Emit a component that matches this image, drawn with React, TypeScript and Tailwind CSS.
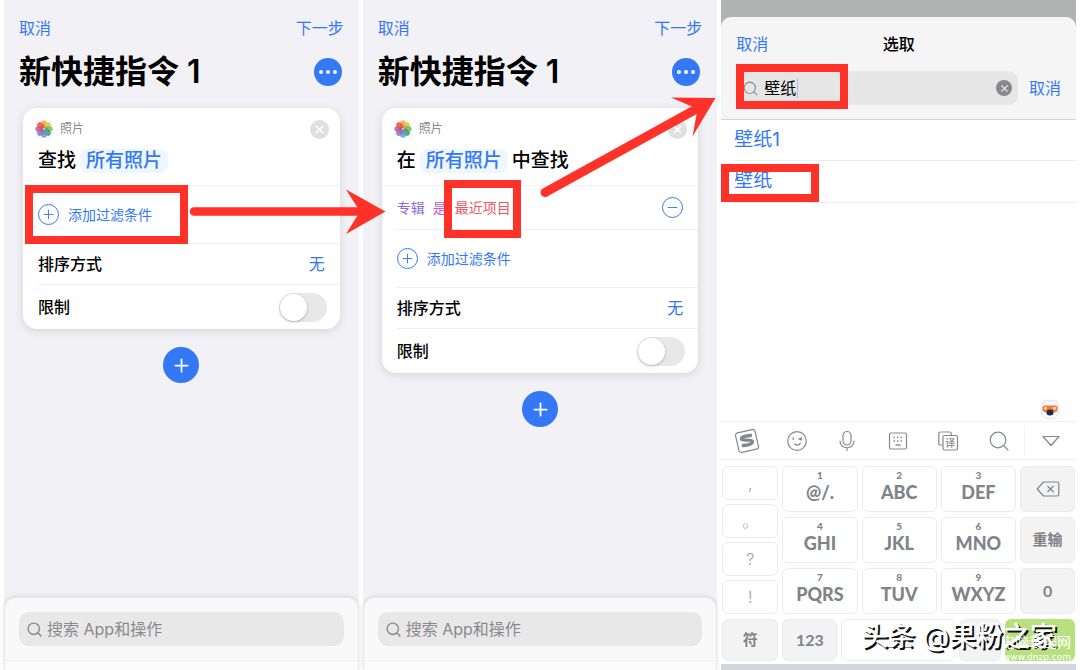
import React, { useState } from 'react';
import { X, Minus, Plus, Search } from 'lucide-react';

const petals = ['#f3a63b', '#d9c93f', '#7dbb52', '#3f9a6a', '#5b9bd5', '#7d74c4', '#b55d9c', '#e5524a'];

function PhotosIcon() {
  return (
    <svg viewBox="0 0 18 18" className="h-[18px] w-[18px] shrink-0">
      <rect x="0.5" y="0.5" width="17" height="17" rx="4" fill="#fff" stroke="#f1f1f3" />
      {petals.map((fill, i) => (
        <ellipse
          key={fill}
          cx="9"
          cy="4.6"
          rx="3"
          ry="4.2"
          fill={fill}
          fillOpacity="0.85"
          transform={`rotate(${i * 45} 9 9)`}
        />
      ))}
      <circle cx="9" cy="9" r="0.8" fill="#fff" />
    </svg>
  );
}

// Red rectangle drawn round the thing to tap
function Mark({ className }: { className: string }) {
  return <span className={'pointer-events-none absolute z-10 border-8 border-[#ff3229] ' + className} />;
}

function AddFilterRow({ marked }: { marked?: boolean }) {
  return (
    <div className="relative flex h-[57px] items-center pl-[15px]">
      <button className="flex items-center gap-[9px] text-sm text-[#3478f6]">
        <span className="flex h-[21px] w-[21px] items-center justify-center rounded-full border border-[#3478f6]">
          <Plus size={15} strokeWidth={1.5} />
        </span>
        添加过滤条件
      </button>
      {marked && <Mark className="-top-px left-[2px] h-[59px] w-[163px]" />}
    </div>
  );
}

function ShortcutScreen({ id, filtered }: { id: string; filtered?: boolean }) {
  const [limited, setLimited] = useState(false);

  return (
    <section className="flex min-w-0 flex-1 flex-col bg-[#f2f1f6]">
      <header className="px-[15px] pt-4">
        <div className="flex h-6 items-center justify-between text-base text-[#3478f6]">
          <button>取消</button>
          <button>下一步</button>
        </div>
        <div className="mt-3 flex h-10 items-center justify-between pr-0.5">
          <h1 className="text-[32px] leading-10 font-semibold text-black">新快捷指令 1</h1>
          <button
            aria-label="更多"
            className="flex h-7 w-7 items-center justify-center gap-[3px] rounded-full bg-[#3478f6]"
          >
            <span className="h-1 w-1 rounded-full bg-white" />
            <span className="h-1 w-1 rounded-full bg-white" />
            <span className="h-1 w-1 rounded-full bg-white" />
          </button>
        </div>
      </header>

      <main className="px-[19px] pt-4">
        <div className="rounded-[14px] bg-white shadow-[0_2px_10px_rgba(0,0,0,0.12)]">
          <div className="border-b border-[#efeff1] pt-3 pr-[11px] pb-3 pl-3">
            <div className="flex h-[18px] items-center gap-[7px]">
              <PhotosIcon />
              <span className="flex-1 text-xs text-[#8a8a8e]">照片</span>
              <button
                aria-label="删除"
                className="flex h-[19px] w-[19px] items-center justify-center rounded-full bg-[#dfdfe1] text-white"
              >
                <X size={13} strokeWidth={3} />
              </button>
            </div>
            <div className="mt-[11px] flex h-6 items-center gap-1 pl-[3px] text-[19px] font-medium text-black">
              {filtered ? '在' : '查找'}
              <button className="h-6 rounded-lg bg-[#eef6ff] px-1.5 leading-6 text-[#3478f6]">所有照片</button>
              {filtered && '中查找'}
            </div>
          </div>

          {filtered && (
            <div className="ml-[15px] flex h-11 items-center border-b border-[#efeff1] pr-[15px] text-sm">
              <button className="text-[#8a6be0]">专辑</button>
              <button className="ml-2 text-[#c45ed6]">是</button>
              <button className="relative ml-2 text-[#ee5a64]">
                最近项目
                <Mark className="-top-[18px] -left-[11px] h-[58px] w-[77px]" />
              </button>
              <button
                aria-label="移除条件"
                className="ml-auto flex h-[21px] w-[21px] items-center justify-center rounded-full border border-[#3478f6] text-[#3478f6]"
              >
                <Minus size={15} strokeWidth={1.5} />
              </button>
            </div>
          )}

          <AddFilterRow marked={!filtered} />

          <div className="ml-[15px] flex h-[42px] items-center justify-between border-y border-[#efeff1] pr-[15px] text-base">
            <span className="font-medium text-black">排序方式</span>
            <button className="text-[#3478f6]">无</button>
          </div>
          <div className="flex h-11 items-center justify-between pr-[13px] pl-[15px] text-base">
            <label htmlFor={id} className="font-medium text-black">
              限制
            </label>
            <input
              id={id}
              type="checkbox"
              role="switch"
              checked={limited}
              onChange={(e) => setLimited(e.target.checked)}
              className="h-[29px] w-12 appearance-none rounded-full bg-[#e8e8e8] p-px before:block before:h-[27px] before:w-[27px] before:rounded-full before:bg-white before:shadow-[0_1px_3px_rgba(0,0,0,0.25)] checked:bg-[#34c759] checked:before:ml-[19px]"
            />
          </div>
        </div>

        <button
          aria-label="添加操作"
          className="mx-auto mt-[18px] flex h-9 w-9 items-center justify-center rounded-full bg-[#3478f6] text-white"
        >
          <Plus size={21} strokeWidth={2} />
        </button>
      </main>

      <footer className="mt-auto rounded-t-xl border border-b-0 border-[#e9e9eb] bg-[#f9f9f9] px-3.5 pt-3.5 shadow-[0_-1px_4px_rgba(0,0,0,0.1)]">
        <div className="flex h-[34px] items-center gap-1 rounded-[10px] bg-[#e8e8e8] px-[7px] text-[#8a8a8e]">
          <Search size={17} strokeWidth={2} className="shrink-0" />
          <input
            type="text"
            aria-label="搜索 App和操作"
            placeholder="搜索 App和操作"
            className="w-full min-w-0 bg-transparent text-base outline-none placeholder:text-[#8a8a8e]"
          />
        </div>
        <div className="-mx-3.5 mt-3.5 h-[10px] border-t border-[#f1f1f1] bg-[#fbfbfb]" />
      </footer>
    </section>
  );
}

const letterKeys = [
  ['1', '@/.'],
  ['2', 'ABC'],
  ['3', 'DEF'],
  ['4', 'GHI'],
  ['5', 'JKL'],
  ['6', 'MNO'],
  ['7', 'PQRS'],
  ['8', 'TUV'],
  ['9', 'WXYZ'],
];

const keyBase = 'flex items-center justify-center rounded-md border border-[#ebebec] ';
const greyKey = keyBase + 'bg-[#f3f3f4] font-bold text-[#808488] ';

function Toolbar() {
  return (
    <div className="flex h-[39px] items-center border-y border-[#f0f0f1] text-[#85898d]">
      <div className="grid flex-1 grid-cols-6 items-center justify-items-center">
        <button aria-label="搜狗输入法">
          <svg viewBox="0 0 26 26" className="h-[26px] w-[26px]" fill="none" stroke="currentColor">
            <g transform="rotate(-13 13 13)">
              <rect x="3" y="3" width="20" height="20" rx="2.5" strokeWidth="1.2" />
              <path
                d="M19 8.8c-3-1.1-10.5-1.400-11 1-.5 2.400 10.300 2 10.200 4.800-.1 2.900-7.700 2.700-11.200 1.500"
                strokeWidth="3.400"
              />
            </g>
          </svg>
        </button>
        <button aria-label="表情">
          <svg viewBox="0 0 22 22" className="h-[22px] w-[22px]" fill="none" stroke="currentColor" strokeLinecap="round">
            <circle cx="11" cy="11" r="9.3" strokeWidth="1.2" />
            <path d="M7.200 8v1.400M15.500 7.800l-2.200 1.100 2.200 1M8.800 14c1.300 1.600 4 1.600 5.400-.6" strokeWidth="1.300" />
          </svg>
        </button>
        <button aria-label="语音">
          <svg viewBox="0 0 22 22" className="h-[22px] w-[22px]" fill="none" stroke="currentColor" strokeLinecap="round">
            <rect x="7" y="1.500" width="8" height="13.500" rx="4" strokeWidth="1.200" />
            <path d="M4 11c0 9 14 9 14 0M11 17.800v2.600" strokeWidth="1.200" />
          </svg>
        </button>
        <button aria-label="键盘">
          <svg viewBox="0 0 22 22" className="h-[22px] w-[22px]" fill="none" stroke="currentColor">
            <rect x="2.500" y="3" width="17" height="16" rx="1.500" strokeWidth="1.200" />
            <path d="M6.500 7.500h10M6.500 11h10" strokeWidth="1.500" strokeDasharray="1.500 2" />
            <path d="M8.500 15h5" strokeWidth="1.400" />
          </svg>
        </button>
        <button aria-label="翻译" className="relative h-[22px] w-[22px]">
          <svg viewBox="0 0 22 22" className="h-[22px] w-[22px]" fill="none" stroke="currentColor">
            <path d="M5.500 15H3.300a1.500 1.500 0 0 1-1.500-1.500V3.500A1.500 1.500 0 0 1 3.300 2h9.400a1.500 1.500 0 0 1 1.500 1.500V5" strokeWidth="1.200" />
            <rect x="6" y="5.500" width="14.500" height="14.500" rx="1.500" strokeWidth="1.200" />
          </svg>
          <span className="absolute top-2 left-2 text-[10px] leading-[10px] font-medium">译</span>
        </button>
        <button aria-label="搜索">
          <svg viewBox="0 0 22 22" className="h-[22px] w-[22px]" fill="none" stroke="currentColor" strokeLinecap="round">
            <circle cx="10" cy="10" r="7.800" strokeWidth="1.200" />
            <path d="M15.700 15.700l4.300 4.300" strokeWidth="1.200" />
          </svg>
        </button>
      </div>
      <button aria-label="收起" className="flex h-8 w-[52px] items-center justify-center border-l border-[#f3f3f4]">
        <svg viewBox="0 0 20 14" className="h-[14px] w-5" fill="none" stroke="currentColor" strokeLinejoin="round">
          <path d="M2 2.500h16L10 11.500z" strokeWidth="1.200" />
        </svg>
      </button>
    </div>
  );
}

function Keyboard() {
  return (
    <div className="bg-white">
      <Toolbar />
      <div className="px-px pt-1.5 pb-[3px]">
        <div className="flex gap-1">
          <div className="flex w-14 flex-col gap-1">
            {[',', '。', '?', '!'].map((k) => (
              <button key={k} className={keyBase + 'flex-1 bg-white text-base leading-5 font-light text-[#9a9da0]'}>
                {k}
              </button>
            ))}
          </div>
          <div className="grid flex-1 grid-cols-3 gap-x-1 gap-y-[5px]">
            {letterKeys.map(([num, label]) => (
              <button
                key={num}
                className={keyBase + "h-[46px] flex-col bg-white pb-1.5 font-['Lato',sans-serif] font-black text-[#808488]"}
              >
                <span className="text-[10px] leading-3">{num}</span>
                <span className="text-lg leading-[22px]">{label}</span>
              </button>
            ))}
          </div>
          <div className="flex w-[55px] flex-col gap-[5px]">
            <button aria-label="删除" className={greyKey + 'flex-1'}>
              <svg viewBox="0 0 24 18" className="h-[18px] w-6" fill="none" stroke="currentColor" strokeLinejoin="round">
                <path d="M7.500 2h13.500a1.800 1.800 0 0 1 1.800 1.800v10.400a1.800 1.800 0 0 1-1.800 1.800H7.500L1.200 9z" strokeWidth="1.200" />
                <path d="M11.500 6l6 6M17.500 6l-6 6" strokeWidth="1.200" />
              </svg>
            </button>
            <button className={greyKey + 'flex-1 text-[15px]'}>重输</button>
            <button className={greyKey + "flex-1 font-['Lato',sans-serif] text-base"}>0</button>
          </div>
        </div>

        <div className="relative mt-[5px] flex h-[42px] gap-1">
          <button className={greyKey + 'w-14 text-[15px]'}>符</button>
          <button className={greyKey + "w-[55px] font-['Lato',sans-serif] text-base"}>123</button>
          <button aria-label="空格" className={keyBase + 'flex-1 items-end bg-white pb-3 text-[#808488]'}>
            <span className="h-px w-7 bg-current" />
          </button>
          <button aria-label="中英" className={greyKey + 'w-[42px]'} />
          <button aria-label="换行" className="w-[70px] rounded-md bg-[#b9e07f]" />

          <div className="pointer-events-none absolute right-[18px] bottom-1.5 text-[27px] leading-9 font-medium whitespace-nowrap text-white [text-shadow:2px_2px_0_#111]">
            头条 @果粉之家
          </div>
          <div className="pointer-events-none absolute right-1 -bottom-0.5 text-right text-white">
            <div className="text-sm leading-[18px]">电脑装配网</div>
            <div className="font-['DejaVu_Sans',sans-serif] text-[9px] leading-3">www.dnzp.com</div>
          </div>
        </div>
      </div>
      <div className="h-1.5 bg-[#d3d7dc]" />
    </div>
  );
}

function PickerScreen() {
  const [query, setQuery] = useState('壁纸');

  return (
    <section className="flex min-w-0 flex-1 flex-col bg-white">
      <div className="bg-[#b1b3b2] pt-[17px]">
        <header className="rounded-t-[10px] border-b border-[#d6d6d8] bg-[#f5f5f6] px-[15px] pb-3.5">
          <div className="grid h-[54px] grid-cols-3 items-center text-base">
            <button className="justify-self-start text-[#3478f6]">取消</button>
            <h2 className="text-center font-medium text-black">选取</h2>
          </div>
          <div className="flex items-center gap-[11px]">
            <div className="relative flex h-[34px] min-w-0 flex-1 items-center gap-[5px] rounded-[10px] bg-[#e6e6e6] px-1.5">
              <Search size={17} strokeWidth={1.5} className="shrink-0 text-[#8a8a8e]" />
              <input
                type="text"
                aria-label="搜索"
                value={query}
                onChange={(e) => setQuery(e.target.value)}
                className="w-full min-w-0 bg-transparent text-base text-black outline-none"
              />
              <span className="absolute left-[61px] h-5 w-px bg-[#aebdf0]" />
              <button
                aria-label="清除"
                onClick={() => setQuery('')}
                className="flex h-4 w-4 shrink-0 items-center justify-center rounded-full bg-[#89898d] text-[#e6e6e6]"
              >
                <X size={11} strokeWidth={2.5} />
              </button>
              <Mark className="-top-[7px] left-0 h-[45px] w-28" />
            </div>
            <button className="shrink-0 text-base text-[#3478f6]">取消</button>
          </div>
        </header>
      </div>

      <ul className="pl-[13px] text-[19px] text-[#3478f6]">
        <li className="border-b border-[#ededef]">
          <button className="h-10 w-full text-left">壁纸1</button>
        </li>
        <li className="relative border-b border-[#ededef]">
          <button className="h-[41px] w-full text-left">壁纸</button>
          <Mark className="top-[3px] -left-[13px] h-[38px] w-[98px]" />
        </li>
      </ul>

      <div className="mt-auto flex justify-end pr-4 pb-px">
        <svg viewBox="0 0 20 22" className="h-[22px] w-5">
          <path
            d="M4 3c1-2 3 0 6 0s5-2 6 0c3 5 3.500 9 2 13-1.500 3.800-4.500 5-8 5s-6.500-1.200-8-5C.5 12 1 8 4 3z"
            fill="#f8f9fc"
            stroke="#d3d8e6"
            strokeWidth="0.800"
          />
          <rect x="2.500" y="7.500" width="15" height="6.500" rx="2" fill="#f08034" />
          <rect x="4.500" y="9" width="2" height="2.500" rx="0.800" fill="#fff" />
          <rect x="13.500" y="9" width="2" height="2.500" rx="0.800" fill="#fff" />
          <ellipse cx="10" cy="14.500" rx="3.600" ry="2.900" fill="#25274f" />
        </svg>
      </div>
      <Keyboard />
    </section>
  );
}

export default function App() {
  return (
    <div className="relative flex min-h-screen gap-1 bg-white px-1 font-['Inter','Noto_Sans_CJK_SC',sans-serif]">
      <ShortcutScreen id="limit-before" />
      <ShortcutScreen id="limit-after" filtered />
      <PickerScreen />

      {/* Arrows from one step to the next */}
      <svg
        viewBox="0 0 1080 670"
        className="pointer-events-none absolute top-0 left-0 z-20 w-full"
        fill="#ff3229"
        stroke="#ff3229"
      >
        <path d="M194 211.500H368" strokeWidth="8.500" strokeLinecap="round" />
        <path d="M346 189.500L385.500 211.500L346 234L360 211.500z" stroke="none" />
        <path d="M545 192.500L700 107" strokeWidth="9" strokeLinecap="round" />
        <path d="M671 97.500L715.500 98L692.500 136.500L697.500 109z" stroke="none" />
      </svg>
    </div>
  );
}
